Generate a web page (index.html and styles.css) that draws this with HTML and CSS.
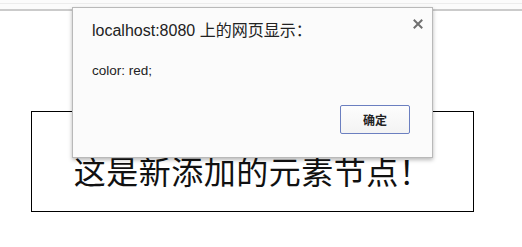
FILE: index.html
```html
<!DOCTYPE html>
<html>
<head>
<meta charset="utf-8">
<link rel="stylesheet" href="styles.css">
</head>
<body>
<div class="topbar"><div class="topline"></div></div>
<div class="node-box">这是新添加的元素节点！</div>
<div class="dialog">
  <div class="dlg-title">localhost:8080 上的网页显示：</div>
  <svg class="dlg-close" width="10" height="10" viewBox="0 0 10 10"><path d="M1.5 1.5 L8.5 8.5 M8.5 1.5 L1.5 8.5" stroke="#6f6f6f" stroke-width="2" stroke-linecap="square"/></svg>
  <div class="dlg-msg">color: red;</div>
  <div class="dlg-actions"><button class="dlg-btn">确定</button></div>
</div>
</body>
</html>
```
FILE: styles.css
```css
html, body {
  margin: 0;
  padding: 0;
  background: #ffffff;
  width: 522px;
  height: 247px;
  overflow: hidden;
}
body {
  position: relative;
  font-family: "Liberation Sans", "Noto Sans CJK SC", sans-serif;
}
.topbar {
  height: 9px;
  border-bottom: 2px solid #cbcbcb;
  background: #fbfbfb;
}
.topline {
  height: 3px;
  border-bottom: 1px solid #ececec;
}
.node-box {
  margin: 100px 0 0 31px;
  width: 441px;
  height: 57px;
  padding-top: 42px;
  box-sizing: content-box;
  border: 1px solid #000;
  display: flex;
  justify-content: center;
  align-items: flex-start;
  font-family: "Noto Sans CJK SC", "Noto Sans CJK JP", serif;
  font-size: 32px;
  line-height: 32px;
  letter-spacing: 0.5px;
  color: #111;
}
.dialog {
  position: absolute;
  left: 72px;
  top: 7px;
  width: 318px;
  height: 136px;
  border: 1px solid #b9b9b9;
  background: #fbfbfb;
  box-shadow: 0 2px 4px rgba(0, 0, 0, 0.28);
  padding: 13px 22px 0 19px;
  box-sizing: content-box;
  color: #222;
}
.dlg-title {
  font-size: 16px;
  line-height: 20px;
  color: #222;
  white-space: nowrap;
}
.dlg-close {
  position: absolute;
  top: 11px;
  right: 9px;
}
.dlg-msg {
  margin-top: 22px;
  font-size: 13.5px;
  line-height: 16px;
  color: #222;
}
.dlg-actions {
  margin-top: 26px;
  display: flex;
  justify-content: flex-end;
}
.dlg-btn {
  width: 70px;
  height: 29px;
  border: 1px solid #6b7fc0;
  border-radius: 2px;
  background: linear-gradient(#fdfdfd, #f3f3f3);
  font-family: "Noto Sans CJK SC", sans-serif;
  font-size: 12px;
  font-weight: bold;
  color: #222;
  padding: 0;
}
```
